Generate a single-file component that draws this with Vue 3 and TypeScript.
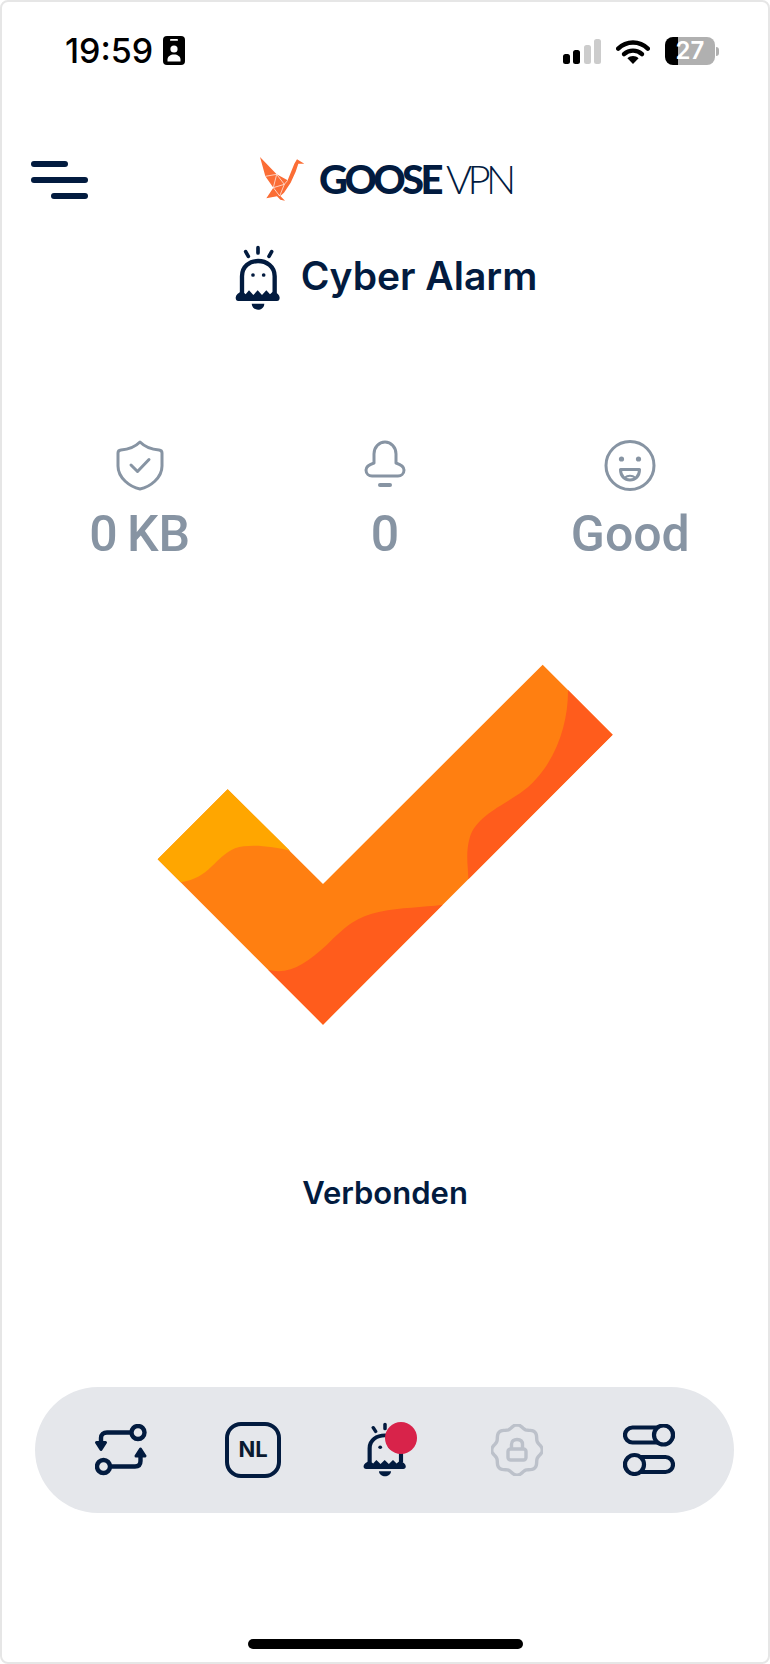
<script setup lang="ts">
// scalloped badge outline for the disabled lock tab
const badgePath = Array.from({ length: 96 }, (_, i) => {
  const a = (i / 96) * Math.PI * 2 - Math.PI / 2
  const r = 23.6 + 1.7 * Math.cos(a * 8 + Math.PI * 4)
  const x = 26 + r * Math.cos(a)
  const y = 26 + r * Math.sin(a)
  return `${i === 0 ? 'M' : 'L'}${x.toFixed(2)} ${y.toFixed(2)}`
}).join(' ') + ' Z'
</script>

<template>
  <div class="phone">
    <!-- Status bar -->
    <div class="status">
      <div class="status__left">
        <span class="status__time">19:59</span>
        <svg class="status__id" width="22" height="29" viewBox="0 0 22 29">
          <rect width="22" height="29" rx="4" fill="#000" />
          <rect x="7" y="3" width="8" height="1.8" rx="0.9" fill="#fff" />
          <circle cx="11" cy="13" r="3.6" fill="#fff" />
          <path d="M4.5 25.5v-2c0-3 3-5 6.5-5s6.5 2 6.5 5v2z" fill="#fff" />
        </svg>
      </div>
      <div class="status__right">
        <div class="signal">
          <span class="signal__bar signal__bar--1"></span>
          <span class="signal__bar signal__bar--2"></span>
          <span class="signal__bar signal__bar--3"></span>
          <span class="signal__bar signal__bar--4"></span>
        </div>
        <svg width="34" height="25" viewBox="0 0 34 25">
          <path d="M2.2 9.6C10.5 1.4 23.5 1.4 31.8 9.6" fill="none" stroke="#000" stroke-width="4.4" stroke-linecap="round" />
          <path d="M8 15.2C13 10.4 21 10.4 26 15.2" fill="none" stroke="#000" stroke-width="4.4" stroke-linecap="round" />
          <path d="M17 25L11.4 19.2C14.5 16.4 19.5 16.4 22.6 19.2Z" fill="#000" />
        </svg>
        <div class="battery">
          <div class="battery__body">27</div>
          <span class="battery__nub"></span>
        </div>
      </div>
    </div>

    <!-- Header -->
    <header class="header">
      <div class="burger">
        <span class="burger__line burger__line--short"></span>
        <span class="burger__line"></span>
        <span class="burger__line burger__line--short burger__line--end"></span>
      </div>
      <div class="logo">
        <svg class="logo__bird" width="60" height="56" viewBox="0 0 180 168">
          <path d="M45 18L95 70L128 88L148 38L156 25L178 38L160 38L152 62L137 95L117 125L106 135L120 149L106 146L96 136L64 142L85 110L61 76Z" fill="#fb6d35" />
          <path d="M61 76L95 70L85 110L118 100L95 70M118 100L128 88M85 110L104 135L118 100" fill="none" stroke="#fff" stroke-width="2" />
        </svg>
        <span class="logo__goose">GOOSE</span><span class="logo__vpn">VPN</span>
      </div>
    </header>

    <!-- Title -->
    <div class="title">
      <svg width="50" height="66.7" viewBox="30 10 150 200">
        <path d="M105 18V34M68 30L76 44M146 30L138 44" fill="none" stroke="#021b3f" stroke-width="11" stroke-linecap="round" />
        <path d="M57 155V104C57 74 80 58 105 58C130 58 155 74 155 104V155" fill="none" stroke="#021b3f" stroke-width="13" />
        <path d="M38 168C38 160 46 154 57 148L68 158L78 146L91 160L104 146L117 160L130 146L141 158L152 148C162 154 170 160 170 168C170 174 167 178 162 178H46C41 178 38 174 38 168Z" fill="#021b3f" />
        <path d="M86 186H124C122 210 88 210 86 186Z" fill="#021b3f" />
        <circle cx="90" cy="100" r="5.5" fill="#021b3f" />
        <circle cx="122" cy="100" r="5.5" fill="#021b3f" />
      </svg>
      <h1 class="title__text">Cyber Alarm</h1>
    </div>

    <!-- Stats -->
    <div class="stats">
      <div class="stat">
        <svg width="48" height="51" viewBox="0 0 48 51" class="stat__icon">
          <path d="M24 2C29 7 36 9.5 43 10C45 10.2 46 11 46 13V26C46 38 34 47 24 49C14 47 2 38 2 26V13C2 11 3 10.2 5 10C12 9.5 19 7 24 2Z" fill="none" stroke="#8794a3" stroke-width="3" stroke-linejoin="round" />
          <path d="M15 25L21.5 31.5L33 19.5" fill="none" stroke="#8794a3" stroke-width="3" stroke-linecap="round" stroke-linejoin="round" />
        </svg>
        <span class="stat__value">0 KB</span>
      </div>
      <div class="stat">
        <svg width="42" height="51" viewBox="0 0 42 51" class="stat__icon">
          <path d="M10 23V14A11 12 0 0 1 32 14V23C35 24 40 26 40 30C40 34 37 36 34 36H8C5 36 2 34 2 30C2 26 7 24 10 23Z" fill="none" stroke="#8794a3" stroke-width="3" stroke-linejoin="round" />
          <path d="M16 45H26" stroke="#8794a3" stroke-width="4" stroke-linecap="round" />
        </svg>
        <span class="stat__value">0</span>
      </div>
      <div class="stat">
        <svg width="52" height="51" viewBox="0 0 52 51" class="stat__icon">
          <circle cx="26" cy="25.5" r="24" fill="none" stroke="#8794a3" stroke-width="3" />
          <circle cx="17.5" cy="19" r="2.6" fill="#8794a3" />
          <circle cx="34.5" cy="19" r="2.6" fill="#8794a3" />
          <path d="M16.5 29.5H35.5C35.5 36.5 31 40 26 40C21 40 16.5 36.5 16.5 29.5Z" fill="none" stroke="#8794a3" stroke-width="3" stroke-linejoin="round" />
          <path d="M21 37.5C23.5 35 28.5 35 31 37.5" fill="none" stroke="#8794a3" stroke-width="2" />
        </svg>
        <span class="stat__value">Good</span>
      </div>
    </div>

    <!-- Check mark -->
    <svg class="check" width="490" height="390" viewBox="0 0 1470 1170">
      <polygon points="1208,44 1418,254 549,1124 53,628 263,418 549,702" fill="#ff7f11" />
      <path d="M53 628L263 418L450 602C400 590 330 580 285 595C225 620 210 685 122 697Z" fill="#ffa600" />
      <path d="M385 960C450 975 500 940 560 885C620 825 650 800 720 785C780 772 850 772 908 764L549 1124Z" fill="#ff5c1c" />
      <path d="M1284 120L1418 254L985 688C985 650 975 610 990 560C1010 500 1080 470 1140 430C1240 360 1285 230 1284 120Z" fill="#ff5c1c" />
    </svg>

    <p class="connected">Verbonden</p>

    <!-- Bottom nav -->
    <nav class="nav">
      <div class="nav__item">
        <svg width="52" height="52" viewBox="0 0 52 52" fill="none" stroke="#021b3f" stroke-width="4.4">
          <circle cx="43" cy="8.5" r="6.5" />
          <path d="M36.5 8.5H12C8.5 8.5 6 10.5 6 14V22" />
          <path d="M1.5 18.5L6 25.5L10.5 18.5Z" fill="#021b3f" stroke-width="3" stroke-linejoin="round" />
          <circle cx="8.5" cy="42.5" r="6.5" />
          <path d="M15 42.5H40C43.5 42.5 45.5 40.5 45.5 37V29" />
          <path d="M41 32L45.5 25L50 32Z" fill="#021b3f" stroke-width="3" stroke-linejoin="round" />
        </svg>
      </div>
      <div class="nav__item">
        <div class="flag">NL</div>
      </div>
      <div class="nav__item nav__item--alarm">
        <svg width="48" height="56" viewBox="30 10 150 200" preserveAspectRatio="none">
          <path d="M105 18V34M68 30L76 44M146 30L138 44" fill="none" stroke="#021b3f" stroke-width="11" stroke-linecap="round" />
          <path d="M57 155V104C57 74 80 58 105 58C130 58 155 74 155 104V155" fill="none" stroke="#021b3f" stroke-width="13" />
          <path d="M38 168C38 160 46 154 57 148L68 158L78 146L91 160L104 146L117 160L130 146L141 158L152 148C162 154 170 160 170 168C170 174 167 178 162 178H46C41 178 38 174 38 168Z" fill="#021b3f" />
          <path d="M86 186H124C122 210 88 210 86 186Z" fill="#021b3f" />
          <circle cx="90" cy="100" r="6" fill="#021b3f" />
          <circle cx="122" cy="100" r="6" fill="#021b3f" />
        </svg>
        <span class="nav__badge"></span>
      </div>
      <div class="nav__item">
        <svg width="52" height="52" viewBox="0 0 52 52" fill="none" stroke="#bcc1ca" stroke-width="3.4">
          <path :d="badgePath" stroke-linejoin="round" />
          <rect x="17" y="25" width="18" height="11" rx="2.5" stroke-width="3.4" />
          <path d="M20.5 25V20.5C20.5 17 23 15.5 26 15.5S31.5 17 31.5 20.5V25" />
        </svg>
      </div>
      <div class="nav__item">
        <svg width="52" height="52" viewBox="0 0 52 52" fill="#e5e7eb" stroke="#021b3f" stroke-width="4.2">
          <rect x="2" y="3.5" width="48" height="15" rx="7.5" />
          <circle cx="40.5" cy="11" r="9.5" />
          <rect x="2" y="33" width="48" height="15" rx="7.5" />
          <circle cx="11.5" cy="40.5" r="9.5" />
        </svg>
      </div>
    </nav>

    <div class="home"></div>
  </div>
</template>

<style scoped>
.phone {
  box-sizing: border-box;
  width: 770px;
  height: 1664px;
  border: 2px solid #e6e6e6;
  border-radius: 8px;
  background: #fff;
  font-family: Inter, sans-serif;
  color: #021b3f;
  overflow: hidden;
}

.status {
  display: flex;
  justify-content: space-between;
  align-items: flex-start;
  height: 29px;
  margin-top: 34px;
  padding: 0 49px 0 63px;
}

.status__left {
  display: flex;
  align-items: center;
  gap: 10px;
}

.status__time {
  font-size: 34px;
  line-height: 29px;
  font-weight: 500;
  color: #000;
}

.status__right {
  display: flex;
  align-items: center;
  gap: 15px;
  padding-top: 1px;
}

.signal {
  display: flex;
  align-items: flex-end;
  gap: 3.5px;
  height: 25px;
}

.signal__bar {
  width: 7px;
  border-radius: 2.5px;
  background: #000;
}

.signal__bar--1 { height: 10px; }
.signal__bar--2 { height: 14px; }
.signal__bar--3 { height: 19px; background: #ccc; }
.signal__bar--4 { height: 25px; background: #ccc; }

.battery {
  display: flex;
  align-items: center;
  gap: 1px;
}

.battery__body {
  width: 50px;
  height: 28px;
  border-radius: 8px;
  background: linear-gradient(90deg, #000 26%, #b0b0b0 26%);
  color: #fff;
  font-size: 24px;
  line-height: 28px;
  font-weight: 600;
  text-align: center;
}

.battery__nub {
  width: 3px;
  height: 9px;
  border-radius: 0 3px 3px 0;
  background: #b0b0b0;
}

.header {
  display: flex;
  align-items: center;
  height: 56px;
  margin-top: 86px;
  padding-left: 29px;
}

.burger {
  display: flex;
  flex-direction: column;
  gap: 10px;
  width: 57px;
  margin-top: 2px;
  margin-right: 157px;
}

.burger__line {
  display: block;
  height: 6px;
  border-radius: 3px;
  background: #021b3f;
}

.burger__line--short { width: 37px; }
.burger__line--end { align-self: flex-end; }

.logo {
  display: flex;
  align-items: center;
}

.logo__bird {
  margin-right: 14px;
}

.logo__goose {
  font-family: Lato, sans-serif;
  font-size: 40px;
  font-weight: 900;
  letter-spacing: -3.6px;
  line-height: 56px;
}

.logo__vpn {
  margin-left: 6px;
  font-family: Lato, sans-serif;
  font-size: 40px;
  font-weight: 300;
  letter-spacing: -4.6px;
  line-height: 56px;
}

.title {
  display: flex;
  align-items: center;
  justify-content: center;
  gap: 18px;
  height: 67px;
  margin-top: 38px;
}

.title__text {
  margin: 0 0 6px;
  font-size: 39px;
  font-weight: 600;
  line-height: 48px;
}

.stats {
  display: grid;
  grid-template-columns: repeat(3, 1fr);
  height: 120px;
  margin-top: 128px;
  padding: 0 15px;
}

.stat {
  display: flex;
  flex-direction: column;
  align-items: center;
}

.stat__icon {
  flex: none;
}

.stat__value {
  margin-top: 15px;
  font-family: Roboto, sans-serif;
  font-size: 50px;
  font-weight: 500;
  word-spacing: -3px;
  line-height: 57px;
  color: #8794a3;
}

.check {
  display: block;
  margin: 90px 0 0 138px;
}

.connected {
  margin: 134px 0 0;
  font-size: 31px;
  font-weight: 600;
  line-height: 38px;
  text-align: center;
}

.nav {
  display: grid;
  grid-template-columns: repeat(5, 132px);
  align-items: center;
  height: 126px;
  margin: 175px 0 0 33px;
  width: 699px;
  box-sizing: border-box;
  padding: 0 19px 0 20px;
  border-radius: 63px;
  background: #e5e7eb;
}

.nav__item {
  position: relative;
  display: flex;
  align-items: center;
  justify-content: center;
}

.nav__badge {
  position: absolute;
  left: 66px;
  top: 0;
  width: 32px;
  height: 32px;
  border-radius: 50%;
  background: #d8234a;
}

.flag {
  box-sizing: border-box;
  width: 56px;
  height: 56px;
  border: 4.5px solid #021b3f;
  border-radius: 16px;
  font-size: 22px;
  font-weight: 700;
  line-height: 47px;
  text-align: center;
  color: #0a1a30;
}

.home {
  width: 275px;
  height: 10px;
  margin: 126px 0 0 246px;
  border-radius: 5px;
  background: #000;
}
</style>
